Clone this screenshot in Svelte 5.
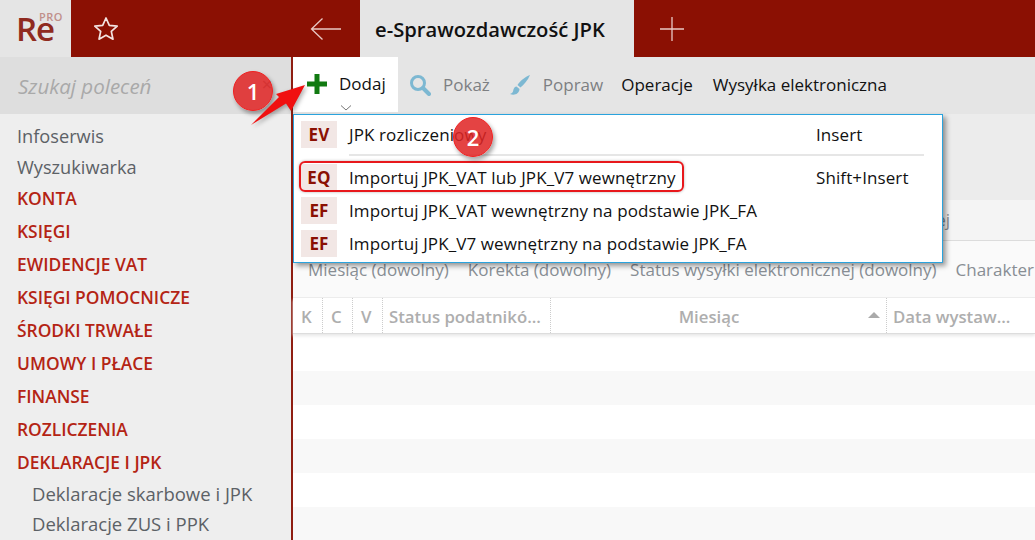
<script>
  const nav = [
    { t: 'Infoserwis', k: 'plain' }, { t: 'Wyszukiwarka', k: 'plain' },
    { t: 'KONTA', k: 'head' }, { t: 'KSIĘGI', k: 'head' }, { t: 'EWIDENCJE VAT', k: 'head' },
    { t: 'KSIĘGI POMOCNICZE', k: 'head' }, { t: 'ŚRODKI TRWAŁE', k: 'head' }, { t: 'UMOWY I PŁACE', k: 'head' },
    { t: 'FINANSE', k: 'head' }, { t: 'ROZLICZENIA', k: 'head' }, { t: 'DEKLARACJE I JPK', k: 'head' },
    { t: 'Deklaracje skarbowe i JPK', k: 'sub' }, { t: 'Deklaracje ZUS i PPK', k: 'sub' }
  ];
  const filters = ['Miesiąc (dowolny)', 'Korekta (dowolny)', 'Status wysyłki elektronicznej (dowolny)', 'Charakter'];
  const rows = [0, 1, 2, 3, 4, 5];
</script>

<div class="app">
  <header class="top">
    <div class="logo"><span class="re">Re</span><span class="pro">PRO</span></div>
    <div class="star">
      <svg width="26" height="26" viewBox="0 0 26 26"><path d="M13 2l3.300 7.300 7.900.8-5.900 5.300 1.700 7.800-7-4-7 4 1.700-7.800-5.900-5.300 7.900-.8z" fill="none" stroke="#f3e4e2" stroke-width="1.700" stroke-linejoin="round"/></svg>
    </div>
    <div class="back">
      <svg width="32" height="24" viewBox="0 0 32 24"><path d="M31 12H1.500M12.500 1.500L1.500 12l11 10.500" fill="none" stroke="#e9c9c5" stroke-width="1.300"/></svg>
    </div>
    <div class="tab">e-Sprawozdawczość JPK</div>
    <div class="plus">
      <svg width="24" height="24" viewBox="0 0 24 24"><path d="M12 0v24M0 12h24" stroke="#e9c9c5" stroke-width="1.300"/></svg>
    </div>
  </header>

  <div class="body">
    <aside class="side">
      <div class="search"><span>Szukaj poleceń</span><span class="clear">×</span></div>
      <nav class="nav">
        {#each nav as n}
          <div class={n.k}>{n.t}</div>
        {/each}
      </nav>
    </aside>

    <main class="main">
      <div class="toolbar">
        <div class="tool add">
          <svg class="ic" width="20" height="20" viewBox="0 0 20 20"><path d="M10 0v20M0 10h20" stroke="#117a11" stroke-width="5"/></svg>
          <span>Dodaj</span>
          <svg class="chev" width="12" height="6" viewBox="0 0 12 6"><path d="M1 .5l5 4.500 5-4.500" fill="none" stroke="#777" stroke-width="1"/></svg>
        </div>
        <div class="tool dim first">
          <svg width="22" height="22" viewBox="0 0 22 22"><circle cx="9" cy="9" r="6.500" fill="none" stroke="#7db8d2" stroke-width="3"/><path d="M14 14l6 6" stroke="#7db8d2" stroke-width="4" stroke-linecap="round"/></svg>
          <span>Pokaż</span>
        </div>
        <div class="tool dim second">
          <svg width="22" height="22" viewBox="0 0 22 22"><path d="M21 1C16 3 11 7 8.500 11l3 2.500C15 10.500 19 6 21 1z" fill="#7db8d2"/><path d="M7.500 12.500c-3 .5-3 3.500-3.500 5-.3 1-1.500 2-3 2.500 4 1.500 9 .5 9.500-5z" fill="#7db8d2"/></svg>
          <span>Popraw</span>
        </div>
        <div class="tool op">Operacje</div>
        <div class="tool send">Wysyłka elektroniczna</div>
      </div>

      <div class="panel"></div>
      <div class="tabs"><span>Dane bieżącej</span></div>
      <div class="filters">
        {#each filters as f}<span>{f}</span>{/each}
      </div>
      <div class="thead">
        <div class="th c1">K</div>
        <div class="th c1">C</div>
        <div class="th c1">V</div>
        <div class="th c3">Status podatnikó...</div>
        <div class="th c4">Miesiąc<i class="sort"></i></div>
        <div class="th c5">Data wystaw...</div>
        <div class="th c6">I</div>
      </div>
      <div class="rows">
        {#each rows as r}<div class="row" class:alt={r % 2 === 1}></div>{/each}
      </div>

      <div class="menu">
        <div class="item"><b class="code">EV</b><span class="lab">JPK rozliczeniowy</span><span class="key">Insert</span></div>
        <div class="sep"></div>
        <div class="item tall"><b class="code">EQ</b><span class="lab">Importuj JPK_VAT lub JPK_V7 wewnętrzny</span><span class="key">Shift+Insert</span><div class="ring"></div></div>
        <div class="item"><b class="code">EF</b><span class="lab">Importuj JPK_VAT wewnętrzny na podstawie JPK_FA</span></div>
        <div class="item"><b class="code">EF</b><span class="lab">Importuj JPK_V7 wewnętrzny na podstawie JPK_FA</span></div>
      </div>
    </main>
  </div>

  <div class="badge b1">1</div>
  <div class="badge b2">2</div>
  <svg class="arrow" width="62" height="42" viewBox="0 0 62 42"><path d="M55 1L41 27l-5-7.500L1 41l28-28-3-3z" fill="#f01010"/></svg>
</div>

<style>
  :global(body) { margin: 0; }
  .app { position: relative; width: 1035px; height: 540px; overflow: hidden; font-family: "Open Sans", sans-serif; font-size: 17px; background: #fff; color: #111; }
  .top { display: flex; height: 57px; background: #8b1003; }
  .logo { position: relative; width: 71px; background: #e5e5e5; }
  .re { position: absolute; left: 16px; top: 6px; font-size: 33px; font-weight: 600; color: #8f2a20; letter-spacing: -1px; }
  .pro { position: absolute; left: 39px; top: 9px; font-size: 11px; font-weight: 600; color: #c08f8a; letter-spacing: .5px; }
  .star { width: 70px; display: flex; align-items: center; justify-content: center; }
  .back { width: 219px; display: flex; align-items: center; justify-content: flex-end; padding-right: 18px; box-sizing: border-box; }
  .tab { width: 274px; background: #e5e5e5; font-weight: 600; font-size: 20.200px; padding-left: 15px; box-sizing: border-box; display: flex; align-items: center; white-space: nowrap; }
  .plus { width: 76px; display: flex; align-items: center; justify-content: center; }
  .body { display: flex; height: 483px; }
  .side { width: 293px; flex: none; background: #eee; border-right: 2px solid #8f1e12; box-sizing: border-box; }
  .search { height: 57px; background: #dedede; display: flex; align-items: center; justify-content: space-between; padding: 0 19px 0 18px; font-style: italic; font-size: 20.500px; color: #a9a9a9; }
  .clear { font-style: normal; font-size: 18px; color: #8c8c8c; margin-top: -4px; }
  .nav { padding-top: 7px; }
  .nav > div { padding-left: 17px; white-space: nowrap; }
  .plain { height: 31px; line-height: 31px; color: #5c6166; font-size: 18.200px; }
  .head { height: 33px; line-height: 33px; color: #b42414; font-weight: 600; font-size: 17.400px; }
  .plain + .head { margin-top: -1px; }
  .sub { height: 30px; line-height: 30px; color: #5c6166; font-size: 18.500px; padding-left: 32px !important; }
  .main { position: relative; flex: 1; min-width: 0; background: #fff; }
  .toolbar { display: flex; height: 57px; background: #e5e5e5; white-space: nowrap; }
  .tool { display: flex; align-items: center; height: 55px; padding-bottom: 2px; }
  .add { position: relative; width: 105px; flex: none; background: #fff; box-sizing: border-box; padding-left: 14px; gap: 12px; }
  .chev { position: absolute; left: 47px; top: 48px; }
  .dim { color: #7d7f82; gap: 12px; }
  .first { margin-left: 11px; }
  .second { margin-left: 19px; }
  .op { margin-left: 18px; }
  .send { margin-left: 20px; }
  .panel { height: 86px; background: #ececec; }
  .tabs { height: 41px; background: #f4f4f4; border-bottom: 1px solid #dcdcdc; box-sizing: border-box; position: relative; color: #8a8e92; line-height: 40px; white-space: nowrap; }
  .tabs span { position: absolute; right: 85px; }
  .filters { height: 57px; background: #fafafa; display: flex; gap: 19px; padding: 11px 0 0 15px; box-sizing: border-box; color: #888e94; white-space: nowrap; font-size: 17px; line-height: 36px; border-bottom: 1px solid #ececec; }
  .thead { display: flex; height: 36px; box-sizing: border-box; border-bottom: 1px solid #ddd; box-shadow: 0 2px 3px #e8e8e8; color: #aeaeae; font-weight: 600; font-size: 16.800px; white-space: nowrap; }
  .th { line-height: 37px; flex: none; box-sizing: border-box; border-right: 1px dotted #ccc; padding-left: 8px; position: relative; }
  .c1 { width: 30px; }
  .c3 { width: 168px; padding-left: 6px; }
  .c4 { width: 336px; text-align: center; padding: 0 19px 0 0; }
  .c5 { width: 149px; padding-left: 6px; }
  .c6 { border: none; }
  .sort { position: absolute; right: 6px; top: 14px; border: 6px solid transparent; border-top: 0; border-bottom: 6px solid #aaa; }
  .rows .row { height: 34px; }
  .rows .row:first-child { height: 37px; }
  .row.alt { background: #f8f8f8; }
  .menu { position: absolute; left: 0; top: 57px; width: 650px; height: 149px; box-sizing: border-box; background: #fff; border: 1px solid #2aa3dd; box-shadow: 3px 3px 5px rgba(0,0,0,.4); padding-top: 3px; letter-spacing: .1px; }
  .item { position: relative; display: flex; align-items: center; height: 33px; white-space: nowrap; }
  .tall { margin-top: 5px; }
  .code { flex: none; width: 36px; height: 27px; margin-left: 7px; background: #f2e7e5; color: #8b1003; font-weight: 700; font-size: 17px; line-height: 27px; text-align: center; }
  .lab { margin-left: 12px; width: 467px; flex: none; }
  .sep { height: 2px; margin: 3px 18px 0 55px; background: #e6e6e6; }
  .ring { position: absolute; left: 5px; top: 0; width: 385px; height: 31px; box-sizing: border-box; border: 2px solid #e8181c; border-radius: 6px; box-shadow: 0 0 3px rgba(0,0,0,.3); }
  .badge { position: absolute; width: 38px; height: 38px; border-radius: 50%; background: rgba(224,36,36,.86); border: 1px solid #f02020; color: #fff; font-weight: 600; font-size: 22px; text-align: center; line-height: 38px; box-shadow: 2px 3px 4px rgba(0,0,0,.35); }
  .b1 { left: 233px; top: 71px; }
  .b2 { left: 453px; top: 117px; }
  .arrow { position: absolute; left: 250px; top: 84px; filter: drop-shadow(2px 2px 2px rgba(0,0,0,.3)); }
</style>
